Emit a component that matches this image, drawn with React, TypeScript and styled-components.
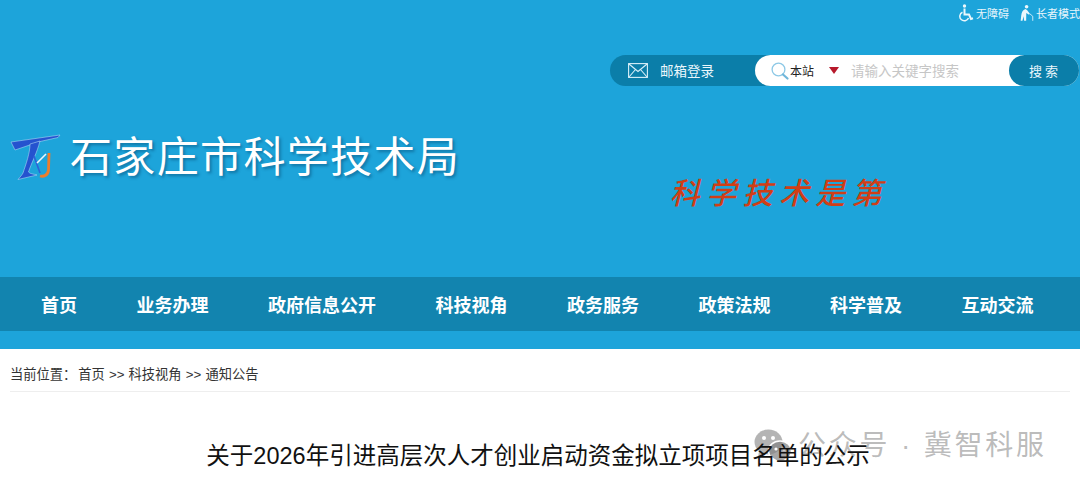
import styled, { createGlobalStyle } from 'styled-components'

const cjk = '"Liberation Sans", "Noto Sans CJK SC", sans-serif'

const GlobalStyle = createGlobalStyle`
  html, body {
    margin: 0;
    padding: 0;
    width: 1080px;
    height: 487px;
    overflow: hidden;
    background: #fff;
    font-family: ${cjk};
  }
`

const Page = styled.div`
  position: relative;
  width: 1080px;
  height: 487px;
  overflow: hidden;
`

const Header = styled.header`
  height: 277px;
  background: #1da4da;
  display: flex;
  flex-direction: column;
`

const UtilBar = styled.div`
  height: 24px;
  padding-top: 2px;
  display: flex;
  justify-content: flex-end;
  align-items: center;
  gap: 11px;
  box-sizing: border-box;
`

const UtilLink = styled.a`
  display: flex;
  align-items: center;
  gap: 2px;
  color: #e9f6fc;
  font-size: 11px;
  white-space: nowrap;
`

const SearchRow = styled.div`
  margin-top: 31px;
  padding-right: 1px;
  display: flex;
  justify-content: flex-end;
`

const MailPill = styled.a`
  width: 171px;
  height: 31px;
  margin-right: -26px;
  padding: 0 0 1px 18px;
  box-sizing: border-box;
  border-radius: 16px 0 0 16px;
  background: #0b7ea9;
  color: #eaf7fc;
  font-size: 13.5px;
  display: flex;
  align-items: center;
  gap: 12px;
`

const SearchBox = styled.div`
  position: relative;
  width: 324px;
  height: 31px;
  border-radius: 16px;
  background: #fff;
  display: flex;
  align-items: center;
  padding-left: 16px;
  box-sizing: border-box;
`

const Scope = styled.span`
  margin-left: 1px;
  width: 39px;
  font-size: 12px;
  color: #222;
`

const Caret = styled.i`
  width: 0;
  height: 0;
  border-left: 5.5px solid transparent;
  border-right: 5.5px solid transparent;
  border-top: 7px solid #b7192b;
`

const Placeholder = styled.span`
  margin: 0 0 1px 12px;
  font-size: 13.5px;
  color: #c6c6c6;
`

const SearchButton = styled.button`
  position: absolute;
  right: 0;
  top: 0;
  width: 70px;
  height: 31px;
  padding-left: 8px;
  border: 0;
  border-radius: 16px;
  background: #0b7ea9;
  color: #eaf7fc;
  font: 13px ${cjk};
  letter-spacing: 3px;
`

const BrandRow = styled.div`
  margin-top: 47px;
  padding-left: 10px;
  display: flex;
  align-items: flex-start;
`

const LogoMark = styled.div`
  width: 60px;
  height: 50px;
  flex-shrink: 0;
`

const SiteName = styled.h1`
  margin: 0;
  font-size: 42px;
  line-height: 50px;
  font-weight: 400;
  letter-spacing: 1.35px;
  color: #fff;
  text-shadow: 2px 2px 3px rgba(0, 60, 100, 0.45);
  white-space: nowrap;
`

const Slogan = styled.div`
  margin: 38px 0 0 213px;
  font-size: 30px;
  line-height: 40px;
  letter-spacing: 6.4px;
  font-weight: 500;
  font-family: "Noto Sans CJK JP", serif;
  color: #d03e16;
  transform: skewX(-14deg);
  white-space: nowrap;
`

const Nav = styled.nav`
  height: 54px;
  background: #1284af;
  display: flex;
  gap: 59.5px;
  padding-left: 41px;
  align-items: center;
`

const NavItem = styled.a`
  color: #fff;
  font-size: 18px;
  font-weight: 700;
  white-space: nowrap;
`

const Stripe = styled.div`
  height: 18px;
  background: #1da4da;
`

const Main = styled.main`
  padding: 0 10px;
`

const Crumbs = styled.div`
  height: 43px;
  padding-top: 6px;
  box-sizing: border-box;
  border-bottom: 1px solid #eeeeee;
  display: flex;
  align-items: center;
  font-size: 13.25px;
  word-spacing: 0.5px;
  color: #333;
  white-space: pre;
`

const CrumbLabel = styled.span`
  margin-right: 2px;
`

const Title = styled.h2`
  position: relative;
  z-index: 1;
  margin: 48px 0 0;
  text-align: center;
  font-size: 23.5px;
  line-height: 32px;
  font-weight: 400;
  color: #111;
  white-space: nowrap;
  padding-right: 4px;
`

const Watermark = styled.div`
  position: absolute;
  left: 754px;
  top: 423px;
  display: flex;
  align-items: center;
  gap: 6px;
  font-size: 28px;
  letter-spacing: 2.8px;
  color: rgba(130, 130, 130, 0.55);
  white-space: pre;
`

const WatermarkText = styled.span`
  margin-bottom: 6px;
`

const navItems = ['首页', '业务办理', '政府信息公开', '科技视角', '政务服务', '政策法规', '科学普及', '互动交流']

const Logo = () => (
  <svg width="52" height="50" viewBox="0 0 52 50">
    <path d="M1 9 L50 2 L48 4.5 L30 8.5 L5 17 Z" fill="#2553cf" stroke="#bfe6f6" strokeWidth="0.5" />
    <path d="M20 11 L30 8 C27 20 21 31 18.5 39 C20 41 24 41 27 42 L8 46.5 C10 44 12 42 13 40 C16 31 20 20 20 11 Z" fill="#2553cf" stroke="#bfe6f6" strokeWidth="0.5" />
    <path d="M24 23 L30 40" fill="none" stroke="#2f62d8" strokeWidth="1.6" />
    <path d="M36 21 L27 30" fill="none" stroke="#eaf7fc" strokeWidth="1.6" />
    <path d="M39 20 L38.5 37 C38 42 34 44 30 43" fill="none" stroke="#ee7d2b" strokeWidth="2.8" />
  </svg>
)

const WheelchairIcon = () => (
  <svg width="16" height="18" viewBox="0 0 16 18" fill="none" stroke="#eaf7fc">
    <circle cx="6.5" cy="2" r="1.7" fill="#eaf7fc" stroke="none" />
    <path d="M6.5 4.5 V10.5 H11 L13 15 L15 14.3" strokeWidth="2" />
    <path d="M4.5 8.2 A4.5 4.5 0 1 0 10.5 14" strokeWidth="1.5" />
  </svg>
)

const ElderIcon = () => (
  <svg width="14" height="20" viewBox="0 0 17 20" fill="#eaf7fc">
    <circle cx="8" cy="2.4" r="2.2" />
    <path d="M6.5 5 C3.5 6 2 9 1.5 13 L0.8 19.5 H3 L4.3 14 L5 19.5 H7.5 L7.6 10 L11 12 L12 11 L8.5 6.5 Z" />
    <path d="M12 11 L15.5 14 V19.5" fill="none" stroke="#eaf7fc" strokeWidth="1" />
  </svg>
)

const MailIcon = () => (
  <svg width="20" height="15" viewBox="0 0 20 15" fill="none" stroke="#d9f0f9" strokeWidth="1.1">
    <rect x="0.6" y="0.6" width="18.8" height="13.8" />
    <path d="M1 1 L10 8.5 L19 1 M1 14 L7.5 6.5 M19 14 L12.5 6.5" />
  </svg>
)

const SearchIcon = () => (
  <svg width="18" height="18" viewBox="0 0 18 18" fill="none">
    <circle cx="7.5" cy="7.5" r="6.4" stroke="#8cc8e6" strokeWidth="1.3" />
    <path d="M12 12.5 L16.5 16.5" stroke="#6fb6da" strokeWidth="2.2" strokeLinecap="round" />
  </svg>
)

const WeChatMark = () => (
  <svg width="38" height="34" viewBox="0 0 38 34">
    <ellipse cx="14.5" cy="13" rx="14" ry="12.5" fill="rgba(130,130,130,0.6)" />
    <path d="M5 22 L4 29 L12 24 Z" fill="rgba(130,130,130,0.6)" />
    <ellipse cx="26" cy="22" rx="11.5" ry="10" fill="rgba(130,130,130,0.7)" stroke="#fff" strokeWidth="1.5" />
    <circle cx="10" cy="9" r="2" fill="#fff" />
    <circle cx="19" cy="9" r="2" fill="#fff" />
    <circle cx="22" cy="20" r="1.6" fill="#fff" />
    <circle cx="30" cy="20" r="1.6" fill="#fff" />
  </svg>
)

export default function App() {
  return (
    <Page>
      <GlobalStyle />
      <Header>
        <UtilBar>
          <UtilLink>
            <WheelchairIcon />
            无障碍
          </UtilLink>
          <UtilLink>
            <ElderIcon />
            长者模式
          </UtilLink>
        </UtilBar>
        <SearchRow>
          <MailPill>
            <MailIcon />
            邮箱登录
          </MailPill>
          <SearchBox>
            <SearchIcon />
            <Scope>本站</Scope>
            <Caret />
            <Placeholder>请输入关键字搜索</Placeholder>
            <SearchButton>搜索</SearchButton>
          </SearchBox>
        </SearchRow>
        <BrandRow>
          <LogoMark>
            <Logo />
          </LogoMark>
          <SiteName>石家庄市科学技术局</SiteName>
          <Slogan>科学技术是第</Slogan>
        </BrandRow>
      </Header>
      <Nav>
        {navItems.map((label) => (
          <NavItem key={label}>{label}</NavItem>
        ))}
      </Nav>
      <Stripe />
      <Main>
        <Crumbs>
          <CrumbLabel>当前位置：</CrumbLabel>首页 &gt;&gt; 科技视角 &gt;&gt; 通知公告
        </Crumbs>
        <Title>关于2026年引进高层次人才创业启动资金拟立项项目名单的公示</Title>
      </Main>
      <Watermark>
        <WeChatMark />
        <WatermarkText>公众号 · 冀智科服</WatermarkText>
      </Watermark>
    </Page>
  )
}
